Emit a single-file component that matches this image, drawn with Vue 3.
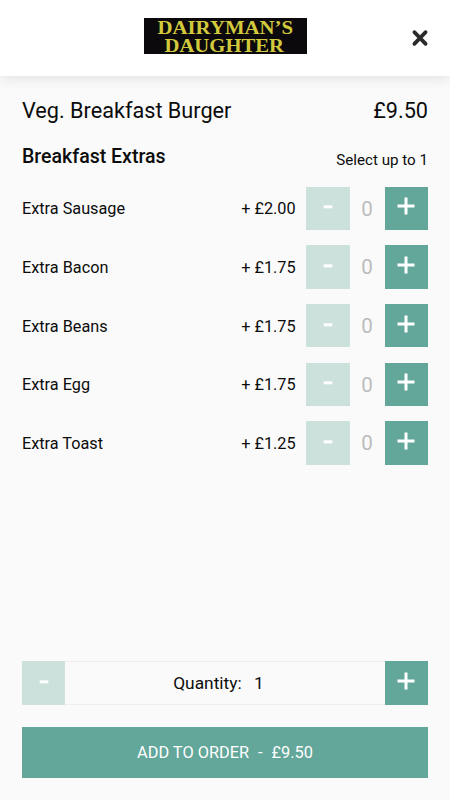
<script setup>
import { ref, computed } from 'vue'

const extras = ref([
  { name: 'Extra Sausage', price: 2, count: 0 },
  { name: 'Extra Bacon', price: 1.75, count: 0 },
  { name: 'Extra Beans', price: 1.75, count: 0 },
  { name: 'Extra Egg', price: 1.75, count: 0 },
  { name: 'Extra Toast', price: 1.25, count: 0 },
])
const basePrice = 9.5
const maxExtras = 1
const quantity = ref(1)

const selected = computed(() => extras.value.reduce((n, e) => n + e.count, 0))
const total = computed(() =>
  quantity.value * extras.value.reduce((sum, e) => sum + e.count * e.price, basePrice)
)
const money = (v) => '£' + v.toFixed(2)

function add(extra) {
  if (selected.value < maxExtras) extra.count++
}
function remove(extra) {
  if (extra.count > 0) extra.count--
}
</script>

<template>
  <div class="page">
    <header class="header">
      <svg class="logo" viewBox="0 0 163 36" role="img" aria-label="Dairyman's Daughter">
        <rect width="163" height="36" fill="#0b090b" />
        <g class="logo-text">
          <text x="13.5" y="15.7" textLength="135.5" lengthAdjust="spacingAndGlyphs">DAIRYMAN’S</text>
          <text x="20.5" y="33.7" textLength="119.5" lengthAdjust="spacingAndGlyphs">DAUGHTER</text>
        </g>
      </svg>
      <button class="close" aria-label="Close">
        <svg viewBox="0 0 16 16"><path d="M3 2.8 13 13.2M13 2.8 3 13.2" /></svg>
      </button>
    </header>

    <main class="content">
      <div class="title-row">
        <h1>Veg. Breakfast Burger</h1>
        <span class="title-price">{{ money(basePrice) }}</span>
      </div>
      <div class="section-row">
        <h2>Breakfast Extras</h2>
        <span class="hint">Select up to {{ maxExtras }}</span>
      </div>
      <ul class="extras">
        <li v-for="extra in extras" :key="extra.name" class="extra">
          <span class="name">{{ extra.name }}</span>
          <span class="price">+ {{ money(extra.price) }}</span>
          <button class="step" :class="{ disabled: !extra.count }" aria-label="Remove" @click="remove(extra)">
            <svg viewBox="0 0 18 18"><path d="M4.7 9.8h8.6" /></svg>
          </button>
          <span class="count" :class="{ empty: !extra.count }">{{ extra.count }}</span>
          <button class="step" aria-label="Add" @click="add(extra)">
            <svg viewBox="0 0 18 18"><path d="M.5 9h17M9 .5v17" /></svg>
          </button>
        </li>
      </ul>
    </main>

    <footer class="footer">
      <div class="quantity">
        <button class="step" :class="{ disabled: quantity === 1 }" aria-label="Decrease" @click="quantity > 1 && quantity--">
          <svg viewBox="0 0 18 18"><path d="M4.7 9.8h8.6" /></svg>
        </button>
        <div class="quantity-label"><span>Quantity:</span><span>{{ quantity }}</span></div>
        <button class="step" aria-label="Increase" @click="quantity++">
          <svg viewBox="0 0 18 18"><path d="M.5 9h17M9 .5v17" /></svg>
        </button>
      </div>
      <button class="submit"><span>ADD TO ORDER</span><span>-</span><span>{{ money(total) }}</span></button>
    </footer>
  </div>
</template>

<style>
body {
  margin: 0;
  background: #fafafa;
}
</style>

<style scoped>
.page {
  box-sizing: border-box;
  height: 800px;
  display: flex;
  flex-direction: column;
  background: #fafafa;
  color: #0c0c0c;
  font-family: Roboto, "Liberation Sans", sans-serif;
  overflow: hidden;
}
button {
  border: 0;
  padding: 0;
  margin: 0;
  background: none;
  font: inherit;
  cursor: pointer;
}
.header {
  flex: none;
  height: 76px;
  box-sizing: border-box;
  padding: 18px 22px 0;
  display: grid;
  grid-template-columns: 1fr 163px 1fr;
  align-items: start;
  background: #fff;
  box-shadow: 0 1px 14px rgba(0, 0, 0, 0.12);
}
.logo {
  grid-column: 2;
  width: 163px;
  height: 36px;
}
.logo-text {
  fill: #d2c93c;
  font: bold 19.3px "Liberation Serif", serif;
}
.close {
  justify-self: end;
  width: 17.5px;
  height: 18px;
  margin-top: 11px;
}
.close svg {
  display: block;
  width: 18px;
  height: 18px;
  fill: none;
  stroke: #2a2a2a;
  stroke-width: 3.3;
  stroke-linecap: round;
}
.content {
  flex: 1;
  padding: 22px 22px 0;
}
.title-row,
.section-row {
  display: flex;
  justify-content: space-between;
}
.title-row {
  height: 26px;
  line-height: 26px;
  font-size: 21.67px;
}
h1,
h2 {
  margin: 0;
  font-size: inherit;
  font-weight: 400;
}
.section-row {
  height: 26px;
  margin-top: 20px;
  line-height: 26px;
}
h2 {
  font-size: 19.55px;
  font-weight: 500;
}
.hint {
  font-size: 15.17px;
  padding-top: 3px;
}
.extras {
  list-style: none;
  margin: 16.6px 0 0;
  padding: 0;
  display: flex;
  flex-direction: column;
  gap: 15.2px;
}
.extra {
  display: grid;
  grid-template-columns: 1fr auto 43.4px 35px 43.4px;
  align-items: center;
  height: 43.5px;
  font-size: 16.25px;
}
.name,
.price,
.count {
  padding-top: 0.8px;
}
.price {
  padding-right: 10.6px;
}
.count {
  text-align: center;
  font-size: 20.6px;
}
.count.empty {
  color: #bcbcbc;
}
.step {
  width: 43.4px;
  height: 43.5px;
  display: flex;
  align-items: center;
  justify-content: center;
  background: #63a69a;
}
.step.disabled {
  background: #cce1db;
}
.step svg {
  width: 18px;
  height: 18px;
  margin-bottom: 4px;
  fill: none;
  stroke: #fff;
  stroke-width: 3;
}
.footer {
  flex: none;
  padding: 0 22px 22px;
}
.quantity {
  display: flex;
  height: 43.5px;
  margin-bottom: 21.8px;
}
.quantity-label {
  flex: 1;
  display: flex;
  align-items: center;
  justify-content: center;
  gap: 12.5px;
  padding-right: 13px;
  border: solid #eee;
  border-width: 1px 0;
  font-size: 17.33px;
}
.submit {
  width: 100%;
  height: 51.4px;
  display: flex;
  align-items: center;
  justify-content: center;
  gap: 9px;
  background: #63a69a;
  color: #fff;
  font-size: 16.35px;
}
</style>
